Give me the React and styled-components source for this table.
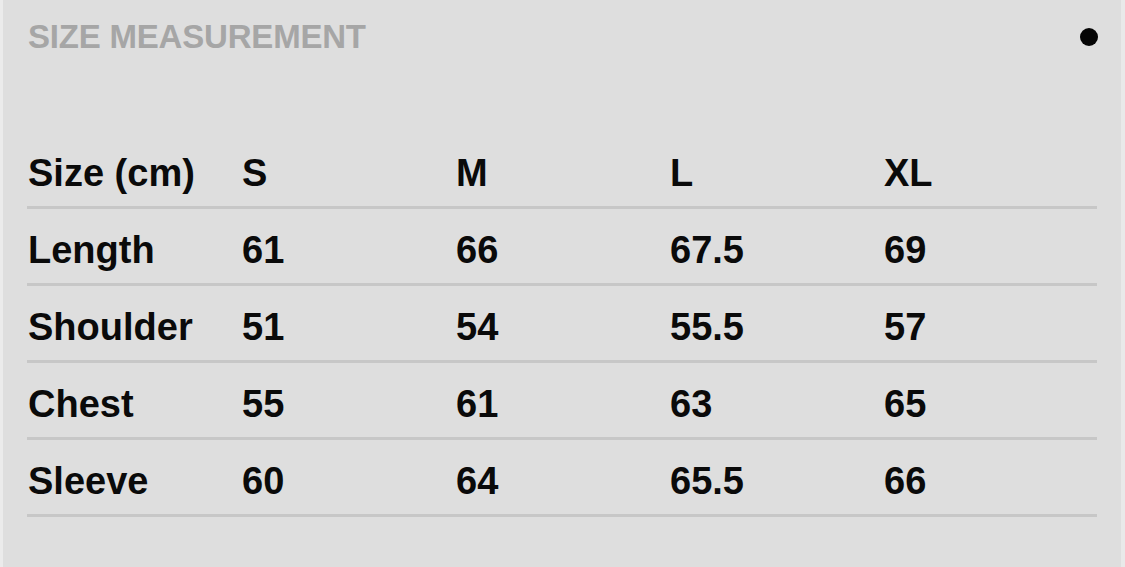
import React from "react";
import styled, { createGlobalStyle } from "styled-components";

const GlobalStyle = createGlobalStyle`
  html, body {
    margin: 0;
    padding: 0;
    background: #dedede;
  }
  body {
    font-family: "Liberation Sans", Arial, sans-serif;
  }
`;

const sizes = ["S", "M", "L", "XL"];

const rows = [
  { label: "Length", values: ["61", "66", "67.5", "69"] },
  { label: "Shoulder", values: ["51", "54", "55.5", "57"] },
  { label: "Chest", values: ["55", "61", "63", "65"] },
  { label: "Sleeve", values: ["60", "64", "65.5", "66"] },
];

const App = () => {
  return (
    <>
      <GlobalStyle />
      <Panel>
        <Header>
          <Title>SIZE MEASUREMENT</Title>
          <Dot />
        </Header>
        <Table>
          <Row>
            <Cell>Size (cm)</Cell>
            {sizes.map((s) => (
              <Cell key={s}>{s}</Cell>
            ))}
          </Row>
          {rows.map((row) => (
            <Row key={row.label}>
              <Cell>{row.label}</Cell>
              {row.values.map((v, k) => (
                <Cell key={k}>{v}</Cell>
              ))}
            </Row>
          ))}
        </Table>
      </Panel>
    </>
  );
};

export default App;

const Panel = styled.div`
  box-sizing: border-box;
  min-height: 100vh;
  border-left: 3px solid #ebebeb;
  border-right: 4px solid #e9e9e9;
  background: #dedede;
  padding: 20px 24px 0 24px;
`;

const Header = styled.div`
  display: flex;
  align-items: center;
  justify-content: space-between;
  width: 1070px;
  padding-left: 1px;
  box-sizing: border-box;
`;

const Title = styled.h2`
  margin: 0;
  font-size: 33px;
  line-height: 33px;
  font-weight: 700;
  color: #a6a6a6;
  letter-spacing: -0.2px;
`;

const Dot = styled.span`
  width: 18px;
  height: 18px;
  border-radius: 50%;
  background: #050505;
  margin-right: -1px;
`;

const Table = styled.div`
  margin-top: 79px;
  width: 1070px;
`;

const Row = styled.div`
  display: grid;
  grid-template-columns: repeat(5, 214px);
  padding: 22px 0 14px;
  border-bottom: 3px solid #c7c7c7;
`;

const Cell = styled.div`
  padding-left: 1px;
  font-size: 38px;
  line-height: 38px;
  font-weight: 700;
  color: #0a0a0a;
`;
